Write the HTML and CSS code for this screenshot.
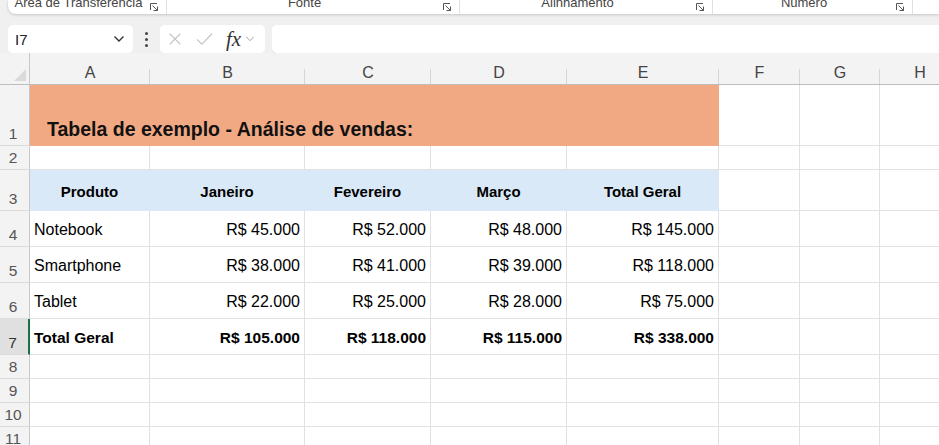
FILE: index.html
```html
<!DOCTYPE html>
<html lang="pt-BR">
<head>
    <meta charset="UTF-8">
    <meta name="viewport" content="width=device-width, initial-scale=1.0">
    <title>Tabela de exemplo</title>
    <link rel="stylesheet" href="styles.css">
</head>
<body>
    <div class="ribbon">
        <div class="group g1"><span class="label">Área de Transferência</span><svg class="launcher" viewBox="0 0 10 10"><path d="M1.5 8V1.5H8M3.5 3.5L8.5 8.5M8.5 4.5V8.5H4.5"/></svg></div>
        <div class="group g2"><span class="label">Fonte</span><svg class="launcher" viewBox="0 0 10 10"><path d="M1.5 8V1.5H8M3.5 3.5L8.5 8.5M8.5 4.5V8.5H4.5"/></svg></div>
        <div class="group g3"><span class="label">Alinhamento</span><svg class="launcher" viewBox="0 0 10 10"><path d="M1.5 8V1.5H8M3.5 3.5L8.5 8.5M8.5 4.5V8.5H4.5"/></svg></div>
        <div class="group g4"><span class="label">Número</span><svg class="launcher" viewBox="0 0 10 10"><path d="M1.5 8V1.5H8M3.5 3.5L8.5 8.5M8.5 4.5V8.5H4.5"/></svg></div>
    </div>

    <div class="formula-row">
        <div class="name-box">
            <span>I7</span>
            <svg class="chev" viewBox="0 0 12 8"><path d="M1.5 1.5L6 6L10.5 1.5"/></svg>
        </div>
        <div class="dots"><i></i><i></i><i></i></div>
        <div class="fx-box">
            <svg class="ico" viewBox="0 0 16 16"><path d="M2 2L14 14M14 2L2 14"/></svg>
            <svg class="ico check" viewBox="0 0 20 16"><path d="M1.5 8.5L7 14L18.5 2"/></svg>
            <span class="fx">fx</span>
            <svg class="chev light" viewBox="0 0 12 8"><path d="M1.5 1.5L6 6L10.5 1.5"/></svg>
        </div>
        <div class="formula-input"></div>
    </div>

    <div class="sheet">
        <!-- column headers -->
        <div class="corner"><svg viewBox="0 0 12 12"><path d="M12 0V12H0Z"/></svg></div>
        <div class="col-hdr">A</div>
        <div class="col-hdr">B</div>
        <div class="col-hdr">C</div>
        <div class="col-hdr">D</div>
        <div class="col-hdr">E</div>
        <div class="col-hdr">F</div>
        <div class="col-hdr">G</div>
        <div class="col-hdr">H</div>

        <!-- row 1 -->
        <div class="row-hdr">1</div>
        <div class="cell title">Tabela de exemplo - Análise de vendas:</div>
        <div class="cell"></div><div class="cell"></div><div class="cell"></div>

        <!-- row 2 -->
        <div class="row-hdr">2</div>
        <div class="cell"></div><div class="cell"></div><div class="cell"></div><div class="cell"></div>
        <div class="cell"></div><div class="cell"></div><div class="cell"></div><div class="cell"></div>

        <!-- row 3 -->
        <div class="row-hdr">3</div>
        <div class="cell head">Produto</div>
        <div class="cell head">Janeiro</div>
        <div class="cell head">Fevereiro</div>
        <div class="cell head">Março</div>
        <div class="cell head">Total Geral</div>
        <div class="cell"></div><div class="cell"></div><div class="cell"></div>

        <!-- row 4 -->
        <div class="row-hdr">4</div>
        <div class="cell">Notebook</div>
        <div class="cell num">R$ 45.000</div>
        <div class="cell num">R$ 52.000</div>
        <div class="cell num">R$ 48.000</div>
        <div class="cell num">R$ 145.000</div>
        <div class="cell"></div><div class="cell"></div><div class="cell"></div>

        <!-- row 5 -->
        <div class="row-hdr">5</div>
        <div class="cell">Smartphone</div>
        <div class="cell num">R$ 38.000</div>
        <div class="cell num">R$ 41.000</div>
        <div class="cell num">R$ 39.000</div>
        <div class="cell num">R$ 118.000</div>
        <div class="cell"></div><div class="cell"></div><div class="cell"></div>

        <!-- row 6 -->
        <div class="row-hdr">6</div>
        <div class="cell">Tablet</div>
        <div class="cell num">R$ 22.000</div>
        <div class="cell num">R$ 25.000</div>
        <div class="cell num">R$ 28.000</div>
        <div class="cell num">R$ 75.000</div>
        <div class="cell"></div><div class="cell"></div><div class="cell"></div>

        <!-- row 7 -->
        <div class="row-hdr selected">7</div>
        <div class="cell bold">Total Geral</div>
        <div class="cell num bold">R$ 105.000</div>
        <div class="cell num bold">R$ 118.000</div>
        <div class="cell num bold">R$ 115.000</div>
        <div class="cell num bold">R$ 338.000</div>
        <div class="cell"></div><div class="cell"></div><div class="cell"></div>

        <!-- rows 8-11 -->
        <div class="row-hdr">8</div>
        <div class="cell"></div><div class="cell"></div><div class="cell"></div><div class="cell"></div>
        <div class="cell"></div><div class="cell"></div><div class="cell"></div><div class="cell"></div>
        <div class="row-hdr">9</div>
        <div class="cell"></div><div class="cell"></div><div class="cell"></div><div class="cell"></div>
        <div class="cell"></div><div class="cell"></div><div class="cell"></div><div class="cell"></div>
        <div class="row-hdr">10</div>
        <div class="cell"></div><div class="cell"></div><div class="cell"></div><div class="cell"></div>
        <div class="cell"></div><div class="cell"></div><div class="cell"></div><div class="cell"></div>
        <div class="row-hdr">11</div>
        <div class="cell"></div><div class="cell"></div><div class="cell"></div><div class="cell"></div>
        <div class="cell"></div><div class="cell"></div><div class="cell"></div><div class="cell"></div>
    </div>
</body>
</html>
```

FILE: styles.css
```css
body {
    margin: 0;
    padding: 0;
    width: 939px;
    height: 445px;
    overflow: hidden;
    background-color: #F0F0F0;
    font-family: 'Liberation Sans', Arial, sans-serif;
    color: #000;
}

/* ribbon (cut at the top) */
.ribbon {
    display: flex;
    height: 14px;
    margin-left: 8px;
    background-color: #FFFFFF;
    border-radius: 0 0 0 8px;
    box-shadow: 0 1px 3px rgba(0, 0, 0, 0.18);
    overflow: hidden;
}

.group {
    display: flex;
    align-items: flex-end;
    box-sizing: border-box;
    padding-right: 7px;
    border-right: 1px solid #E0E0E0;
    height: 14px;
}

.g1 { width: 159px; }
.g2 { width: 293px; }
.g3 { width: 253px; }
.g4 { width: 200px; }

.label {
    flex-grow: 1;
    text-align: center;
    font-size: 13px;
    line-height: 13px;
    color: #444;
    margin-bottom: 5px;
    white-space: nowrap;
}

.launcher {
    width: 10px;
    height: 10px;
    margin-bottom: 2px;
    fill: none;
    stroke: #555;
    stroke-width: 1;
}

/* formula bar */
.formula-row {
    display: flex;
    align-items: center;
    height: 28px;
    margin-top: 11px;
    padding-left: 8px;
}

.name-box {
    display: flex;
    align-items: center;
    justify-content: space-between;
    box-sizing: border-box;
    width: 125px;
    height: 28px;
    padding: 0 8px 0 7px;
    background-color: #FFFFFF;
    border-radius: 5px;
    font-size: 15px;
    color: #222;
}

.chev {
    width: 12px;
    height: 8px;
    fill: none;
    stroke: #333;
    stroke-width: 1.4;
}

.chev.light {
    width: 10px;
    stroke: #999;
    stroke-width: 1.1;
}

.dots {
    display: flex;
    flex-direction: column;
    gap: 3px;
    width: 27px;
    align-items: center;
}

.dots i {
    width: 3px;
    height: 3px;
    border-radius: 50%;
    background-color: #444;
}

.fx-box {
    display: flex;
    align-items: center;
    box-sizing: border-box;
    width: 105px;
    height: 28px;
    padding: 0 0 0 8px;
    background-color: #FFFFFF;
    border-radius: 5px;
}

.ico {
    width: 14px;
    height: 14px;
    fill: none;
    stroke: #C4C4C4;
    stroke-width: 1.3;
}

.ico.check {
    width: 19px;
    margin-left: 13px;
}

.fx {
    margin-left: 12px;
    margin-right: 4px;
    font-family: 'Liberation Serif', 'Times New Roman', serif;
    font-style: italic;
    font-size: 21px;
    line-height: 20px;
    color: #333;
}

.formula-input {
    flex-grow: 1;
    height: 28px;
    margin-left: 7px;
    background-color: #FFFFFF;
    border-radius: 5px 0 0 5px;
    border-bottom: 1px solid #D6D6D6;
}

/* grid */
.sheet {
    display: grid;
    grid-template-columns: 30px 120px 155px 126px 136px 152px 81px 80px 80px;
    grid-template-rows: 32px 61px 24px 41px 36px 36px 36px 36px 24px 24px 24px 24px;
    background-color: #FFFFFF;
}

.corner {
    display: flex;
    align-items: flex-end;
    justify-content: flex-end;
    background-color: #F3F3F3;
    border-bottom: 1px solid #BDBDBD;
    border-right: 1px solid #C8C8C8;
    padding: 0 3px 3px 0;
}

.corner svg {
    width: 12px;
    height: 12px;
    fill: #DADADA;
}

.col-hdr {
    display: flex;
    align-items: flex-end;
    justify-content: center;
    padding-bottom: 2px;
    box-sizing: border-box;
    font-size: 16px;
    color: #444;
    background: linear-gradient(#D6D6D6, #D6D6D6) right bottom / 1px 15px no-repeat, #F3F3F3;
    border-bottom: 1px solid #BDBDBD;
}

.row-hdr {
    display: flex;
    align-items: flex-end;
    justify-content: center;
    box-sizing: border-box;
    padding: 0 3px 2px 0;
    font-size: 15.5px;
    color: #555;
    background-color: #F3F3F3;
    border-bottom: 1px solid #DCDCDC;
    border-right: 1px solid #C8C8C8;
}

.row-hdr.selected {
    background-color: #E0E0E0;
    border-right: 2px solid #1E7145;
    color: #333;
}

.cell {
    display: flex;
    align-items: center;
    box-sizing: border-box;
    padding: 2px 4px 0;
    font-size: 16px;
    white-space: nowrap;
    border-right: 1px solid #E1E1E1;
    border-bottom: 1px solid #E1E1E1;
}

.cell.num {
    justify-content: flex-end;
}

.cell.bold {
    font-weight: bold;
    font-size: 15.5px;
}

.cell.title {
    grid-column: span 5;
    align-items: flex-end;
    padding: 0 0 4px 17px;
    font-size: 19.5px;
    font-weight: bold;
    color: #111;
    background-color: #F1A983;
    border-color: #F1A983;
}

.cell.head {
    justify-content: center;
    padding-top: 3px;
    font-size: 15px;
    font-weight: bold;
    background-color: #DAE9F8;
    border-color: #DAE9F8;
}
```
